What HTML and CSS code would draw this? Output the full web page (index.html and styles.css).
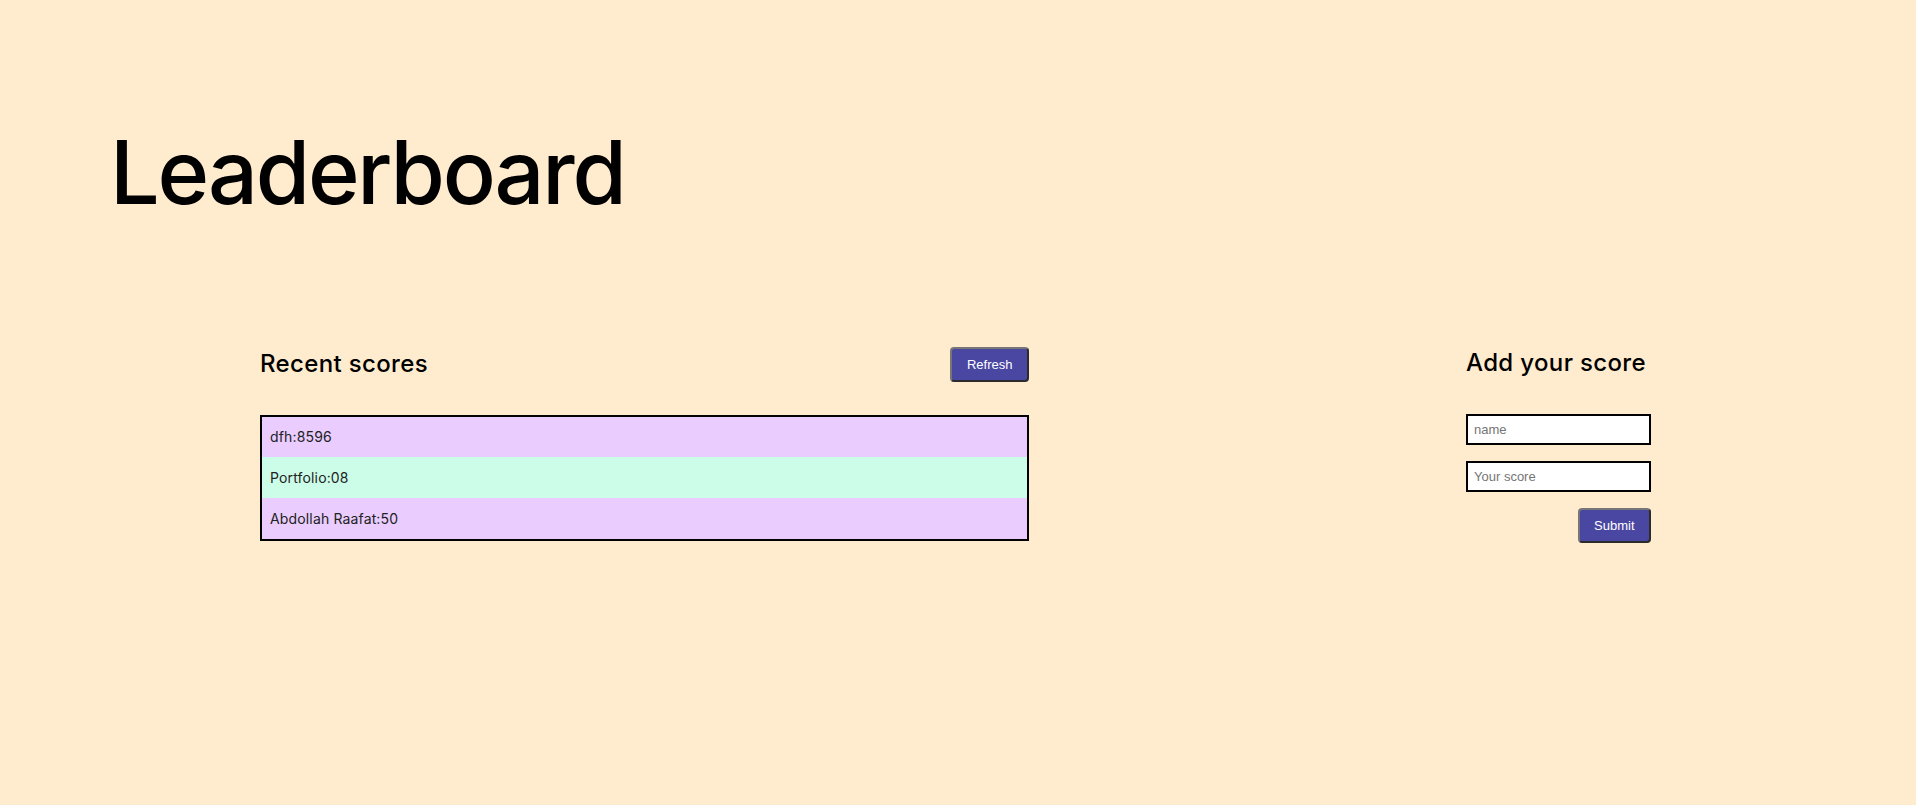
FILE: index.html
```html
<!DOCTYPE html>
<html lang="en">
<head>
<meta charset="utf-8">
<title>Leaderboard</title>
<link rel="stylesheet" href="styles.css">
</head>
<body>
<header class="top">
  <h1 class="title">Leaderboard</h1>
</header>
<main class="board">
  <section class="scores">
    <div class="section-head">
      <h2 class="section-title">Recent scores</h2>
      <button class="btn" type="button">Refresh</button>
    </div>
    <ul class="score-list">
      <li class="score-row odd">dfh:8596</li>
      <li class="score-row even">Portfolio:08</li>
      <li class="score-row odd">Abdollah Raafat:50</li>
    </ul>
  </section>
  <section class="add">
    <div class="section-head">
      <h2 class="section-title">Add your score</h2>
    </div>
    <form class="add-form">
      <input class="field" type="text" placeholder="name">
      <input class="field" type="text" placeholder="Your score">
      <button class="btn" type="button">Submit</button>
    </form>
  </section>
</main>
</body>
</html>
```
FILE: styles.css
```css
* { box-sizing: border-box; }
html, body {
  margin: 0;
  padding: 0;
  background: #ffebcd;
  height: 100%;
}
body {
  font-family: Inter, "Noto Sans", sans-serif;
  color: #000;
}
.top {
  padding: 120px 0 0 110px;
}
.title {
  margin: 0;
  font-size: 88px;
  font-weight: 500;
  line-height: 1.2;
  letter-spacing: -2.2px;
}
.board {
  display: flex;
  justify-content: space-between;
  align-items: flex-start;
  padding: 0 265px 0 260px;
  margin-top: 121px;
}
.scores { width: 769px; }
.add { width: 185px; }
.section-head {
  display: flex;
  justify-content: space-between;
  align-items: center;
  min-height: 34px;
  margin-bottom: 33px;
}
.section-title {
  margin: 0;
  font-size: 24px;
  font-weight: 500;
  line-height: 1.2;
  letter-spacing: 0.35px;
  white-space: nowrap;
}
.btn {
  font-family: "Liberation Sans", Arial, sans-serif;
  font-size: 13px;
  line-height: 15px;
  color: #fff;
  background: #4a47a3;
  border: 2px solid;
  border-color: #767676 #2b2b2b #2b2b2b #767676;
  border-radius: 4px;
  padding: 8px 14.5px;
  cursor: pointer;
}
.score-list {
  list-style: none;
  margin: 0;
  padding: 0;
  border: 2px solid #000;
}
.score-row {
  height: 40.67px;
  display: flex;
  align-items: center;
  padding-left: 8px;
  font-size: 14px;
  letter-spacing: 0.15px;
  color: #222;
}
.score-row.odd { background: #eaccff; }
.score-row.even { background: #ccfde8; }
.add-form {
  display: flex;
  flex-direction: column;
  align-items: flex-end;
  gap: 16px;
}
.field {
  width: 100%;
  height: 31px;
  border: 2px solid #000;
  background: #fff;
  padding: 0 6px;
  font-family: "Liberation Sans", Arial, sans-serif;
  font-size: 13px;
  outline: none;
}
.field::placeholder { color: #757575; }
```
